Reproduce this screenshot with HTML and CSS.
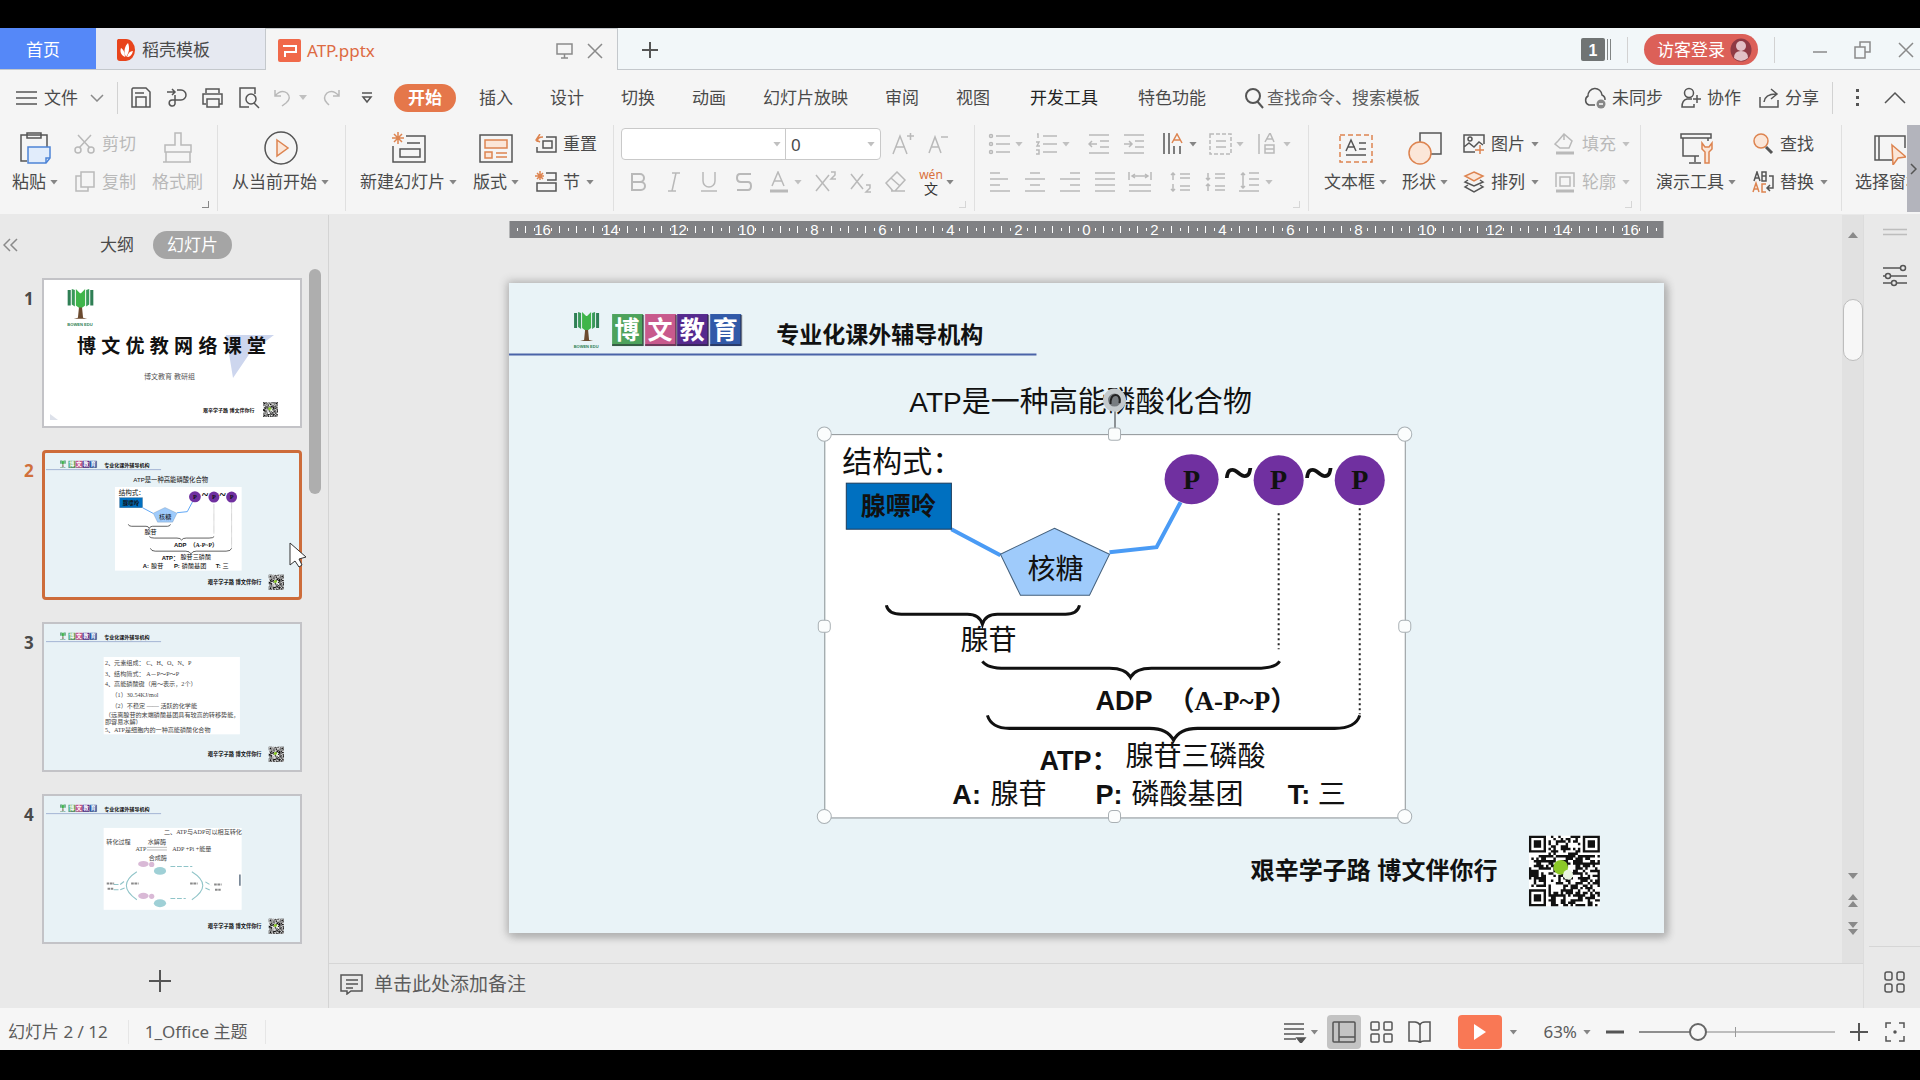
FILE: index.html
```html
<!DOCTYPE html>
<html lang="zh-CN">
<head>
<meta charset="utf-8">
<title>ATP.pptx</title>
<link rel="stylesheet" href="styles.css">
</head>
<body>
<svg class="sprite" aria-hidden="true">
  <defs>
    <symbol id="tree" viewBox="0 0 27 38">
      <path d="M1 2h3v15h-3zM23 2h3v15h-3z" fill="#2f7f55"/>
      <path d="M5 1l3 1v16l-3-2zM22 1l-3 1v16l3-2z" fill="#3a9a5a"/>
      <path d="M9 1l4 4 1 0 4-4v16l-4 3h-1l-4-3z" fill="#3fb54a"/>
      <path d="M12 19h3l1 10 4 1H7l4-1z" fill="#6b4a2f"/>
      <text x="13" y="37" class="tree-name">BOWEN EDU</text>
    </symbol>
    <symbol id="qr" viewBox="0 0 29 29">
      <rect width="29" height="29" fill="#fff"/>
      <path class="qr-modules" id="qr-modules"/>
      <circle cx="13" cy="13" r="3" fill="#8cc928"/>
      <circle cx="16" cy="16" r="2" fill="#e9f5e0"/>
    </symbol>
    <g id="brand">
      <use href="#tree" x="64" y="28" width="27" height="38"/>
      <rect x="103" y="31" width="31" height="32" fill="#4da25c"/>
      <rect x="136" y="31" width="31" height="32" fill="#c85a8d"/>
      <rect x="168" y="31" width="31" height="32" fill="#562a8e"/>
      <rect x="201" y="31" width="31" height="32" fill="#3159a8"/>
      <path d="M103 62h31V32M136 62h31V32M168 62h31V32M201 62h31V32" fill="none" stroke="#223" stroke-opacity=".55" stroke-width="2"/>
      <g class="tile"><text x="118" y="56">博</text><text x="151" y="56">文</text><text x="183" y="56">教</text><text x="216" y="56">育</text></g>
      <text x="267" y="60" class="motto">专业化课外辅导机构</text>
      <path d="M0 71.500H527" stroke="#4a63a8" stroke-width="2"/>
    </g>
    <g id="slogan">
      <text x="741" y="595" class="motto m25">艰辛学子路 博文伴你行</text>
      <use href="#qr" x="1019" y="552" width="71" height="71"/>
    </g>
    <g id="diagram">
      <text x="400" y="129" class="title">ATP<tspan class="cjk29">是一种高能磷酸化合物</tspan></text>
      <rect x="316" y="151" width="580" height="383" fill="#fff"/>
      <text x="333" y="189" class="t30">结构式：</text>
      <path d="M442 246L491 272M600 269L647 264L671 219" fill="none" stroke="#4a9bf5" stroke-width="4"/>
      <rect x="337" y="200" width="105" height="46" fill="#0070c0" stroke="#1c3c5c"/>
      <text x="389" y="232" class="t25">腺嘌呤</text>
      <path d="M545 245L600 271L580 312H511L491 271z" fill="#9fcbfb" stroke="#44607c"/>
      <text x="518" y="296" class="t28">核糖</text>
      <g fill="#7030a0"><ellipse cx="682" cy="196" rx="27" ry="25"/><ellipse cx="769" cy="197" rx="25" ry="25"/><ellipse cx="850" cy="197" rx="25" ry="25"/></g>
      <g class="phos"><text x="682" y="206">P</text><text x="769" y="206">P</text><text x="850" y="206">P</text></g>
      <g class="tilde"><text x="729" y="208">~</text><text x="809" y="208">~</text></g>
      <path d="M769 230V366M850 225V431" stroke="#222" stroke-width="2" stroke-dasharray="2 3"/>
      <g fill="none" stroke="#111" stroke-width="3">
        <path d="M377 322Q379 331 392 331H458Q470 331 473 341Q476 331 488 331H556Q568 331 570 322"/>
        <path d="M473 378Q478 385 496 385H600Q616 385 621 394Q626 385 642 385H747Q766 385 770 378"/>
        <path d="M478 432Q482 445 500 445H640Q658 445 664 457Q670 445 688 445H825Q846 445 850 432"/>
      </g>
      <text x="451" y="367" class="t28">腺苷</text>
      <text x="586" y="427" class="lat">ADP</text>
      <text x="658" y="427" class="ser">（A-P~P）</text>
      <text x="530" y="487" class="lat">ATP：</text>
      <text x="616" y="483" class="t28">腺苷三磷酸</text>
      <text x="443" y="521" class="lat">A:</text><text x="481" y="521" class="t28">腺苷</text>
      <text x="586" y="521" class="lat">P:</text><text x="622" y="521" class="t28">磷酸基团</text>
      <text x="778" y="521" class="lat">T:</text><text x="808" y="521" class="t28">三</text>
    </g>
  </defs>
</svg>

<div class="app">
  <header class="titlebar">
    <button class="tab tab-home">首页</button>
    <button class="tab tab-store">
      <svg width="20" height="24" viewBox="0 0 20 24"><path d="M2 1h8a9 11 0 0 1 0 22H4a3 3 0 0 1-3-3V4a3 3 0 0 1 1-3z" fill="#e8441c"/><path d="M9 19C4 17 4 12 5 10c2 1 4 4 4 9zM10 19c-3-6-1-11 2-14 2 5 1 10-2 14zM11 19c1-4 3-6 6-6-1 4-3 6-6 6z" fill="#fff"/></svg>
      稻壳模板
    </button>
    <div class="tab tab-doc">
      <svg width="23" height="23" viewBox="0 0 23 23"><rect width="23" height="23" rx="2" fill="#f0694a"/><path d="M5 7h13v6H7v5" fill="none" stroke="#fff" stroke-width="2"/></svg>
      <span class="doc-name">ATP.pptx</span>
      <svg class="line mid" width="18" height="18" viewBox="0 0 18 18"><path d="M1 2h15v10H1zM8.500 12v4M5 16h7"/></svg>
      <button class="plain" aria-label="关闭文档"><svg class="line mid" width="18" height="18" viewBox="0 0 18 18"><path d="M2 2l14 14M16 2L2 16"/></svg></button>
    </div>
    <button class="tab-new" aria-label="新建"><svg class="line w2" width="18" height="18" viewBox="0 0 18 18"><path d="M9 1v16M1 9h16"/></svg></button>
    <div class="window-tools">
      <svg width="30" height="23" viewBox="0 0 30 23"><rect width="24" height="23" rx="2" fill="#707474"/><path d="M26.500 1v21M29.500 1v21" stroke="#808484"/><text x="12" y="18" class="badge-num">1</text></svg>
      <i class="vline"></i>
      <button class="login">访客登录<svg width="22" height="24" viewBox="0 0 22 24"><ellipse cx="11" cy="12" rx="10.500" ry="11.500" fill="#8f3a44"/><circle cx="11" cy="8" r="5" fill="#e2c0c6"/><path d="M4 20q0-7 7-7t7 7q-7 6-14 0z" fill="#e2c0c6"/></svg></button>
      <i class="vline"></i>
      <button class="plain win first" aria-label="最小化"><svg class="line mid" width="18" height="18" viewBox="0 0 18 18"><path d="M2 11h14"/></svg></button>
      <button class="plain win" aria-label="还原"><svg class="line mid" width="18" height="18" viewBox="0 0 18 18"><path d="M1 6h10v11H1zM6 6V1h10v10h-5"/></svg></button>
      <button class="plain win" aria-label="关闭"><svg class="line mid" width="18" height="18" viewBox="0 0 18 18"><path d="M2 2l14 14M16 2L2 16"/></svg></button>
    </div>
  </header>

  <nav class="menubar">
    <button class="file-btn">
      <svg class="line" width="22" height="16" viewBox="0 0 22 16"><path d="M0 2h21M0 8h21M0 14h21"/></svg>文件
      <svg class="line mid chev" width="14" height="8" viewBox="0 0 14 8"><path d="M1 1l6 6 6-6"/></svg>
    </button>
    <i class="vline"></i>
    <div class="quick">
      <button class="tool" aria-label="保存"><svg class="line" width="22" height="22" viewBox="0 0 22 22"><path d="M3 1h13l4 4v15H2V2zM6 20V10h10v10M5 6h9"/></svg></button>
      <button class="tool" aria-label="输出为PDF"><svg class="line" width="22" height="22" viewBox="0 0 22 22"><path d="M1 5h8M6 2l3 3-3 3M11 3h4a5 5 0 0 1 0 10H6a3 3 0 1 0 3 4V8"/></svg></button>
      <button class="tool" aria-label="打印"><svg class="line" width="22" height="22" viewBox="0 0 22 22"><path d="M4 6V2h13v4M4 17H1V7h19v10h-3M5 12h12v8H5z"/></svg></button>
      <button class="tool" aria-label="打印预览"><svg class="line" width="22" height="22" viewBox="0 0 22 22"><path d="M11 20H2V1h15v6M16 16l5 5"/><circle cx="13" cy="12" r="5"/></svg></button>
      <button class="tool drop" aria-label="撤消"><svg class="line dim" width="24" height="22" viewBox="0 0 24 22"><path d="M3 3v6h6M3 9Q9 2 15 6q5 5-1 10l-4 3"/></svg><i class="caret dim"></i></button>
      <button class="tool" aria-label="恢复"><svg class="line dim" width="22" height="22" viewBox="0 0 22 22"><path d="M19 3v6h-6M19 9Q13 2 7 6q-5 5 0 10l2 2"/></svg></button>
      <button class="tool" aria-label="更多"><svg class="line" width="12" height="12" viewBox="0 0 12 12"><path d="M1 1h10M2 5h8L6 10z"/></svg></button>
    </div>
    <div class="menus">
      <button class="menu on">开始</button><button class="menu">插入</button><button class="menu">设计</button><button class="menu">切换</button><button class="menu">动画</button><button class="menu">幻灯片放映</button><button class="menu">审阅</button><button class="menu">视图</button><button class="menu wide dark">开发工具</button><button class="menu wide">特色功能</button>
    </div>
    <label class="search"><svg class="line w2" width="20" height="22" viewBox="0 0 20 22"><circle cx="9" cy="9" r="7"/><path d="M13 14l6 7"/></svg><input type="text" placeholder="查找命令、搜索模板" aria-label="查找命令、搜索模板"></label>
    <div class="account">
      <button class="acc"><svg class="line" width="24" height="22" viewBox="0 0 24 22"><path d="M12 18H6a5 5 0 0 1-1-9 7 7 0 0 1 14-1 5 5 0 0 1 3 5"/><circle cx="18" cy="17" r="4.500" fill="#888" stroke="none"/><path d="M16 17h4" stroke="#fff"/></svg>未同步</button>
      <button class="acc"><svg class="line" width="22" height="22" viewBox="0 0 22 22"><circle cx="9" cy="6" r="4.500"/><path d="M12 12H7q-5 1-5 8h12v-3M17 8v8M13 12h8"/></svg>协作</button>
      <button class="acc"><svg class="line" width="22" height="22" viewBox="0 0 22 22"><path d="M2 10v10h18v-7M6 15q1-8 12-8M13 2l6 5-6 5"/></svg>分享</button>
      <i class="vline"></i>
      <button class="plain dots" aria-label="更多选项"><svg width="4" height="20" viewBox="0 0 4 20" fill="#555"><rect y="1" width="3" height="3"/><rect y="8" width="3" height="3"/><rect y="15" width="3" height="3"/></svg></button>
      <button class="plain" aria-label="折叠功能区"><svg class="line" width="22" height="14" viewBox="0 0 22 14"><path d="M1 12l10-10 10 10"/></svg></button>
    </div>
  </nav>

  <section class="ribbon">
    <div class="group g-clip">
      <button class="big"><svg class="line" width="34" height="34" viewBox="0 0 34 34"><path d="M9 30H3V4h26v12M9 2h14v5H9z"/><path d="M10 16h22v11l-4 5H10z" fill="#e1ecfb" stroke="#4d84d6"/><path d="M32 27h-4v5" stroke="#4d84d6"/></svg><span>粘贴<i class="caret"></i></span></button>
      <div class="col">
        <button class="small off"><svg class="line" width="22" height="20" viewBox="0 0 22 20"><path d="M4 1l12 13M17 1L5 14"/><circle cx="4" cy="16" r="3"/><circle cx="17" cy="16" r="3"/></svg>剪切</button>
        <button class="small off"><svg class="line" width="22" height="22" viewBox="0 0 22 22"><path d="M7 1h13v15H7zM7 5H2v15h12v-4"/></svg>复制</button>
      </div>
      <button class="big off"><svg class="line" width="34" height="34" viewBox="0 0 34 34"><path d="M14 14V2h6v12h10v7H4v-7zM5 21v10h24V21M2 31h28"/></svg><span>格式刷</span></button>
      <i class="corner dark"></i>
    </div>
    <div class="group g-play">
      <button class="big"><svg class="line" width="34" height="34" viewBox="0 0 34 34"><circle cx="17" cy="17" r="16"/><path d="M13 9l11 8-11 8z" class="or"/></svg><span>从当前开始<i class="caret"></i></span></button>
    </div>
    <div class="group g-slides">
      <button class="big"><svg class="line" width="34" height="34" viewBox="0 0 34 34"><path d="M14 5h19v26H1V15M15 12h13M8 18h20v8H8z"/><path class="oc" d="M6 1v12M0 7h12M2 3l8 8M10 3l-8 8"/></svg><span>新建幻灯片<i class="caret"></i></span></button>
      <button class="big"><svg class="line" width="34" height="34" viewBox="0 0 34 34"><rect x="1" y="4" width="32" height="27"/><path class="or" d="M6 9h22v8H6zM6 21h7v6H6z"/><path class="oc" d="M17 22h11M17 26h11"/></svg><span>版式<i class="caret"></i></span></button>
      <div class="col">
        <button class="small"><svg class="line" width="22" height="20" viewBox="0 0 22 20"><path d="M11 3h10v15H2v-5M8 7h9v7H8z"/><path class="oc" d="M2 8q0-5 6-5M5 0L1 6l4 2"/></svg>重置</button>
        <button class="small"><svg class="line" width="22" height="22" viewBox="0 0 22 22"><path d="M11 2h10v7h-9M2 12h19v8H2z"/><path class="oc" d="M5 0v9M0 5h9M2 2l6 6M8 2L2 8"/></svg>节<i class="caret"></i></button>
      </div>
    </div>
    <div class="group g-font">
      <div class="col">
        <div class="row">
          <div class="combo"><input type="text" class="font-name" aria-label="字体"><i class="caret dim"></i><input type="text" class="font-size" aria-label="字号" value="0"><i class="caret dim"></i></div>
          <button class="tool" aria-label="增大字号"><svg class="line dim" width="24" height="22" viewBox="0 0 24 22"><path d="M2 21L9 3l7 18M5 14h9M16 3h7M19.500 0v7"/></svg></button>
          <button class="tool" aria-label="减小字号"><svg class="line dim" width="24" height="22" viewBox="0 0 24 22"><path d="M3 20l6-16 6 16M5 14h8M15 4h7"/></svg></button>
        </div>
        <div class="row">
          <button class="tool" aria-label="加粗"><svg class="line dim w2" width="22" height="20" viewBox="0 0 22 20"><path d="M4 2h8a4 4 0 0 1 0 8H4zM4 10h9a4 4 0 0 1 0 8H4z"/></svg></button>
          <button class="tool" aria-label="倾斜"><svg class="line dim" width="22" height="20" viewBox="0 0 22 20"><path d="M9 1h8M5 19h8M13 1L9 19"/></svg></button>
          <button class="tool" aria-label="下划线"><svg class="line dim" width="22" height="22" viewBox="0 0 22 22"><path d="M5 1v9a6 6 0 0 0 12 0V1M3 20h16"/></svg></button>
          <button class="tool" aria-label="删除线"><svg class="line dim w2" width="22" height="20" viewBox="0 0 22 20"><path d="M18 2H7Q4 2 4 6t4 4h7q3 0 3 4t-3 4H4"/></svg></button>
          <button class="tool drop" aria-label="字体颜色"><svg class="line dim" width="24" height="22" viewBox="0 0 24 22"><path d="M5 15L11 1l6 14M7 10h8"/><path d="M3 20h18" stroke-width="3"/></svg><i class="caret dim"></i></button>
          <button class="tool" aria-label="上标"><svg class="line dim" width="24" height="22" viewBox="0 0 24 22"><path d="M2 4l13 16M15 4L2 20M17 1h4v3l-4 4h5"/></svg></button>
          <button class="tool" aria-label="下标"><svg class="line dim" width="24" height="22" viewBox="0 0 24 22"><path d="M2 3l12 15M14 3L2 18M17 14h4v3l-4 4h5"/></svg></button>
          <button class="tool" aria-label="清除格式"><svg class="line dim" width="24" height="22" viewBox="0 0 24 22"><path d="M2 12L13 1l8 8-10 11H9zM7 7l9 8M7 20h14"/></svg></button>
          <button class="tool drop pinyin" aria-label="拼音指南"><span><b>wén</b>文</span><i class="caret"></i></button>
        </div>
      </div>
      <i class="corner"></i>
    </div>
    <div class="group g-para">
      <div class="col">
        <div class="row">
          <button class="tool drop" aria-label="项目符号"><svg class="line dim" width="24" height="22" viewBox="0 0 24 22"><path d="M8 3h14M8 11h14M8 19h14"/><circle cx="3" cy="3" r="1.500"/><circle cx="3" cy="11" r="1.500"/><circle cx="3" cy="19" r="1.500"/></svg><i class="caret dim"></i></button>
          <button class="tool drop" aria-label="编号"><svg class="line dim" width="24" height="22" viewBox="0 0 24 22"><path d="M8 3h14M8 11h14M8 19h14M2 1h1v4M1 9h3l-2 4h3M1 17h3v4H1"/></svg><i class="caret dim"></i></button>
          <button class="tool sp" aria-label="减少缩进"><svg class="line dim" width="22" height="22" viewBox="0 0 22 22"><path d="M1 2h20M12 8h9M12 14h9M1 20h20M1 11h8M4 8l-3 3 3 3"/></svg></button>
          <button class="tool" aria-label="增加缩进"><svg class="line dim" width="22" height="22" viewBox="0 0 22 22"><path d="M1 2h20M12 8h9M12 14h9M1 20h20M1 11h8M6 8l3 3-3 3"/></svg></button>
          <button class="tool drop sp" aria-label="文字方向"><svg class="line" width="24" height="22" viewBox="0 0 24 22"><path d="M2 0v21M7 0v21M12 13v8M18 13v8"/><path class="oc" d="M10 10l5-9 5 9M12 7h6"/></svg><i class="caret"></i></button>
          <button class="tool drop" aria-label="对齐文本"><svg class="line dim" width="24" height="22" viewBox="0 0 24 22"><rect x="1" y="1" width="21" height="20" stroke-dasharray="4 2"/><path d="M7 8h10M7 14h10"/></svg><i class="caret dim"></i></button>
          <button class="tool drop" aria-label="文本排列"><svg class="line dim" width="24" height="22" viewBox="0 0 24 22"><path d="M3 1v20M9 9l5-9 4 9M10 6h7M9 12h9v8H9zM9 16h9"/></svg><i class="caret dim"></i></button>
        </div>
        <div class="row">
          <button class="tool" aria-label="左对齐"><svg class="line dim" width="22" height="20" viewBox="0 0 22 20"><path d="M1 1h10M1 7h18M1 13h10M1 19h20"/></svg></button>
          <button class="tool" aria-label="居中"><svg class="line dim" width="22" height="20" viewBox="0 0 22 20"><path d="M6 1h10M1 7h20M6 13h10M1 19h20"/></svg></button>
          <button class="tool" aria-label="右对齐"><svg class="line dim" width="22" height="20" viewBox="0 0 22 20"><path d="M11 1h10M1 7h20M11 13h10M1 19h20"/></svg></button>
          <button class="tool" aria-label="两端对齐"><svg class="line dim" width="22" height="20" viewBox="0 0 22 20"><path d="M1 1h20M1 7h20M1 13h20M1 19h20"/></svg></button>
          <button class="tool" aria-label="分散对齐"><svg class="line dim" width="24" height="20" viewBox="0 0 24 20"><path d="M1 0v8M23 0v8M4 4h16M7 2L4 4l3 2M17 2l3 2-3 2M1 13h22M1 19h22"/></svg></button>
          <button class="tool sp" aria-label="增大行距"><svg class="line dim" width="22" height="20" viewBox="0 0 22 20"><path d="M11 2h10M11 6h10M11 14h10M11 18h10M4 8V1M2 3l2-2 2 2M4 12v7M2 17l2 2 2-2"/></svg></button>
          <button class="tool" aria-label="减小行距"><svg class="line dim" width="22" height="20" viewBox="0 0 22 20"><path d="M11 2h10M11 6h10M11 14h10M11 18h10M4 1v7M2 6l2 2 2-2M4 19v-7M2 14l2-2 2 2"/></svg></button>
          <button class="tool drop" aria-label="行距"><svg class="line dim" width="24" height="22" viewBox="0 0 24 22"><path d="M11 2h10M11 8h10M11 14h10M1 20h20M5 2v15M3 4l2-2 2 2M3 15l2 2 2-2"/></svg><i class="caret dim"></i></button>
        </div>
      </div>
      <i class="corner"></i>
    </div>
    <div class="group g-draw">
      <button class="big"><svg class="line" width="34" height="34" viewBox="0 0 34 34"><rect class="oc" x="1" y="4" width="32" height="27" stroke-dasharray="5 3"/><path d="M7 20l5-11 5 11M9 16h7M20 12h7M20 18h7M7 24h20"/></svg><span>文本框<i class="caret"></i></span></button>
      <button class="big"><svg class="line" width="34" height="34" viewBox="0 0 34 34"><rect x="12" y="2" width="21" height="21"/><circle class="or" cx="12" cy="22" r="11"/></svg><span>形状<i class="caret"></i></span></button>
      <div class="col">
        <button class="small"><svg class="line" width="22" height="22" viewBox="0 0 22 22"><path d="M12 19H1V2h20v9M1 14l5-4 5 4 5-5 4 3"/><circle cx="7" cy="6" r="2"/><path class="oc" d="M17 12v9M12 17h9"/></svg>图片<i class="caret"></i></button>
        <button class="small"><svg class="line" width="22" height="22" viewBox="0 0 22 22"><path class="or" d="M11 1l9 4-9 5-9-5z"/><path d="M5 9l-3 2 9 4 9-4-3-2M5 14l-3 2 9 5 9-5-3-2"/></svg>排列<i class="caret"></i></button>
      </div>
      <div class="col">
        <button class="small off"><svg class="line" width="22" height="22" viewBox="0 0 22 22"><path d="M4 8l6-7 8 7-3 7H6L1 11zM10 1v6"/><path d="M2 20h18" stroke-width="3"/></svg>填充<i class="caret dim"></i></button>
        <button class="small off"><svg class="line" width="22" height="22" viewBox="0 0 22 22"><path d="M2 16V2h18v14M6 15V6h10v9z"/><path d="M2 20h18" stroke-width="3"/></svg>轮廓<i class="caret dim"></i></button>
      </div>
      <i class="corner"></i>
    </div>
    <div class="group g-tools">
      <button class="big"><svg class="line" width="34" height="34" viewBox="0 0 34 34"><path d="M2 3h30v4H2zM4 7v18h16M29 7v3M16 25v6M10 32h12"/><path class="or" d="M23 12v6l3 3v11h4V21l3-3v-6l-3 4h-4z"/></svg><span>演示工具<i class="caret"></i></span></button>
      <div class="col">
        <button class="small"><svg class="line" width="22" height="22" viewBox="0 0 22 22"><circle class="or" cx="9" cy="8" r="7"/><path d="M14 14l6 6" stroke-width="3"/></svg>查找</button>
        <button class="small"><svg class="line" width="22" height="22" viewBox="0 0 22 22"><path d="M2 10l3-9 3 9M3 7h4M10 1h4v4h-4zM10 5h4v5h-4zM17 5h4v12h-5M18 14l-3 3 3 3"/><path class="oc" d="M1 21l3-9 3 9M2 18h4M14 13h-4v8h4"/></svg>替换<i class="caret"></i></button>
      </div>
    </div>
    <div class="group g-pane">
      <button class="big"><svg class="line" width="34" height="34" viewBox="0 0 34 34"><path d="M20 29H3V5h30v12M7 5v24"/><path class="or" d="M20 14l14 12-8 1-5 7z"/></svg><span>选择窗格</span></button>
    </div>
    <button class="ribbon-next" aria-label="向右滚动"><svg class="line" width="7" height="12" viewBox="0 0 7 12"><path d="M1 1l5 5-5 5"/></svg></button>
  </section>

  <main class="work">
    <aside class="outline">
      <div class="outline-tabs">
        <button class="plain fold" aria-label="收起"><svg class="line mid" width="16" height="14" viewBox="0 0 16 14"><path d="M7 1L1 7l6 6M14 1L8 7l6 6"/></svg></button>
        <button class="plain">大纲</button>
        <button class="otab-on">幻灯片</button>
      </div>
      <div class="outline-body">
        <ol class="thumbs">
          <li><span>1</span><button class="thumb white" aria-label="幻灯片 1"><svg viewBox="0 0 252 142">
            <path d="M180 53h48l-24 18-17 25z" fill="#cdd6ee"/>
            <use href="#tree" x="20" y="6" width="29" height="39"/>
            <text x="31" y="71" class="c-title">博 文 优 教 网 络 课 堂</text>
            <text x="98" y="97" class="c-sub">博文教育 教研组</text>
            <text x="157" y="130" class="c-motto">艰辛学子路 博文伴你行</text>
            <use href="#qr" x="217" y="120" width="15" height="15"/>
            <path d="M4 132v6h8z" fill="#dde1ea"/></svg></button></li>
          <li class="sel"><span>2</span><button class="thumb" aria-label="幻灯片 2"><svg viewBox="0 0 1154 649"><use href="#brand"/><use href="#diagram"/><use href="#slogan"/></svg></button></li>
          <li><span>3</span><button class="thumb" aria-label="幻灯片 3"><svg viewBox="0 0 1154 649"><use href="#brand"/><use href="#slogan"/>
            <rect x="264" y="142" width="624" height="354" fill="#fff"/>
            <g class="notes-text"><text x="270" y="180">2、元素组成： C、H、O、N、P</text><text x="270" y="228">3、结构简式： A－P～P～P</text><text x="270" y="276">4、高能磷酸键（用～表示，2个）</text><text x="300" y="326">（1）30.54KJ/mol</text><text x="300" y="376">（2）不稳定 —— 活跃的化学能</text><text x="270" y="416">（远离腺苷的末端磷酸基团具有较高的转移势能，</text><text x="270" y="448">即容易水解）</text><text x="270" y="486">5、ATP是细胞内的一种高能磷酸化合物</text></g></svg></button></li>
          <li><span>4</span><button class="thumb" aria-label="幻灯片 4"><svg viewBox="0 0 1154 649"><use href="#brand"/><use href="#slogan"/>
            <rect x="264" y="137" width="632" height="375" fill="#fff"/>
            <g class="notes-text"><text x="540" y="166">二、ATP与ADP可以相互转化</text><text x="276" y="212">转化过程</text><text x="466" y="212">水解酶</text><text x="410" y="242">ATP</text><text x="578" y="242">ADP +Pi +能量</text><text x="470" y="284">合成酶</text></g>
            <path d="M462 226h92M462 238h92" stroke="#999" stroke-width="3"/>
            <g fill="none" stroke="#8fc4c8" stroke-width="5"><path d="M416 338Q320 400 416 466M668 338Q768 400 668 466"/><path d="M310 396h30l20-16M310 420h30l20-8M730 384l26 16M730 412l26 12M570 314h100M570 460h70" stroke-dasharray="22 8"/></g>
            <g fill="none" stroke="#8a8a8a" stroke-width="9" stroke-dasharray="12 3"><path d="M278 392h34M282 416h26M390 392h34M660 392h34M770 396h34M774 420h26"/></g>
            <g fill="#d9b9d6"><ellipse cx="446" cy="302" rx="24" ry="14"/><ellipse cx="446" cy="448" rx="24" ry="14"/><circle cx="484" cy="304" r="12"/><circle cx="484" cy="450" r="12"/></g>
            <g fill="#9fd0d6"><ellipse cx="522" cy="334" rx="28" ry="18"/><ellipse cx="522" cy="482" rx="28" ry="18"/></g>
            <path d="M888 350v52" stroke="#678" stroke-width="7"/></svg></button></li>
        </ol>
        <div class="outline-scroll"><i></i></div>
      </div>
      <button class="plain add-slide" aria-label="新建幻灯片"><svg class="line w2" width="24" height="24" viewBox="0 0 24 24"><path d="M12 1v22M1 12h22"/></svg></button>
      <svg class="pointer" width="18" height="26" viewBox="0 0 18 26"><path d="M1 1v22l5-4 4 6 3-2-3-6 7-2z" fill="#fff" stroke="#333"/></svg>
    </aside>

    <section class="stage">
      <svg class="ruler" viewBox="0 0 1154 17"><rect width="1154" height="17" fill="#808184"/><g id="ruler-marks"></g></svg>
      <svg class="slide" viewBox="0 0 1154 649">
        <use href="#brand"/><use href="#diagram"/><use href="#slogan"/>
        <g fill="none" stroke="#8c9296"><rect x="315.500" y="151.500" width="580" height="383"/><path d="M605.500 128V151" stroke-width="2"/></g>
        <circle cx="605" cy="117" r="9" fill="#777c80" stroke="#c4cacd" stroke-width="5"/><path d="M601 121q0-9 5-9t4 8" fill="none" stroke="#222" stroke-width="2"/>
        <g fill="#fbfdfd" stroke="#a9b0b4"><circle cx="315" cy="151" r="7"/><rect x="599" y="145" width="12" height="12" rx="3"/><circle cx="895" cy="151" r="7"/><rect x="309" y="337" width="12" height="12" rx="4"/><rect x="889" y="337" width="12" height="12" rx="4"/><circle cx="315" cy="533" r="7"/><rect x="599" y="527" width="12" height="12" rx="4"/><circle cx="895" cy="533" r="7"/></g>
      </svg>
    </section>
    <div class="vscroll">
      <svg width="10" height="6" viewBox="0 0 10 6"><path d="M0 6l5-6 5 6z"/></svg>
      <i class="vthumb"></i>
      <svg class="vs-down" width="10" height="6" viewBox="0 0 10 6"><path d="M0 0l5 6 5-6z"/></svg>
      <svg width="10" height="13" viewBox="0 0 10 13"><path d="M0 6l5-6 5 6zM0 13l5-6 5 6z"/></svg>
      <svg width="10" height="13" viewBox="0 0 10 13"><path d="M0 0l5 6 5-6zM0 7l5 6 5-6z"/></svg>
    </div>
    <label class="notes"><svg class="line" width="24" height="22" viewBox="0 0 24 22"><path d="M1 2h21v16H11l-4 3v-3H1zM6 7h12M6 11h12M6 15h7"/></svg><input type="text" placeholder="单击此处添加备注" aria-label="备注"></label>
    <aside class="side">
      <svg class="line grip" width="24" height="8" viewBox="0 0 24 8"><path d="M0 1.500h24M0 6.500h24"/></svg>
      <button class="plain" aria-label="属性"><svg class="line" width="24" height="24" viewBox="0 0 24 24"><path d="M0 4h18M8 12h16M0 12h2M0 19h8M13 19h11"/><circle cx="20" cy="4" r="2.500"/><circle cx="5" cy="12" r="2.500"/><circle cx="11" cy="19" r="2.500"/></svg></button>
      <div class="side-foot"><button class="plain" aria-label="更多面板"><svg class="line" width="22" height="22" viewBox="0 0 22 22"><rect x="1" y="1" width="7" height="8" rx="2"/><rect x="13" y="1" width="7" height="8" rx="2"/><rect x="1" y="13" width="7" height="8" rx="2"/><rect x="13" y="13" width="7" height="8" rx="2"/></svg></button></div>
    </aside>
  </main>

  <footer class="status">
    <span class="st-page">幻灯片 2 / 12</span><span class="st-theme">1_Office 主题</span>
    <div class="views">
      <button class="plain drop-b" aria-label="备注"><svg class="line" width="24" height="22" viewBox="0 0 24 22"><path d="M1 3h20M1 8h20M1 13h20M1 18h12"/><path d="M14 17h8l-4 5z" fill="#555"/></svg><i class="caret"></i></button>
      <button class="view on" aria-label="普通视图"><svg class="line" width="24" height="22" viewBox="0 0 24 22"><rect x="1" y="1" width="22" height="20" rx="1"/><path d="M7 1v20M7 16h16"/></svg></button>
      <button class="view" aria-label="幻灯片浏览"><svg class="line" width="24" height="22" viewBox="0 0 24 22"><rect x="1" y="1" width="8" height="8" rx="1"/><rect x="14" y="1" width="8" height="8" rx="1"/><rect x="1" y="13" width="8" height="8" rx="1"/><rect x="14" y="13" width="8" height="8" rx="1"/></svg></button>
      <button class="view" aria-label="阅读视图"><svg class="line" width="24" height="22" viewBox="0 0 24 22"><path d="M12 4q-2-3-5-3H1v19h6q4 0 5 2 1-2 4-2h6V1h-5q-4 0-5 3v17"/></svg></button>
      <button class="show" aria-label="放映"><svg width="14" height="18" viewBox="0 0 14 18"><path d="M1 1l12 8-12 8z" fill="#fff"/></svg></button><i class="caret show-caret"></i>
      <button class="plain zoom-val">63%<i class="caret"></i></button>
      <button class="plain" aria-label="缩小"><svg class="line w3" width="18" height="18" viewBox="0 0 18 18"><path d="M0 9h18"/></svg></button>
      <input class="zoom" type="range" min="0" max="100" value="28" aria-label="缩放">
      <button class="plain" aria-label="放大"><svg class="line w2" width="18" height="18" viewBox="0 0 18 18"><path d="M9 0v18M0 9h18"/></svg></button>
      <button class="plain fit" aria-label="最佳显示比例"><svg class="line" width="20" height="20" viewBox="0 0 20 20"><path d="M1 6V1h5M14 1h5v5M19 14v5h-5M6 19H1v-5"/><circle cx="10" cy="10" r="1" fill="#555"/></svg></button>
    </div>
  </footer>
</div>
<script src="main.js"></script>
</body>
</html>
```
FILE: styles.css
```css
* { box-sizing: border-box; }
body {
  margin: 0;
  background: #000;
  color: #4a4a4a;
  font: 17px/24px "Noto Sans", "Noto Sans CJK SC", sans-serif;
}
button, input { font: inherit; color: inherit; }
button { border: 0; background: none; padding: 0; white-space: nowrap; }
svg { flex: none; display: block; }
i { font-style: normal; flex: none; }
ol { margin: 0; padding: 0; list-style: none; }
.sprite { position: absolute; width: 0; height: 0; }

.app { display: flex; flex-direction: column; min-height: 100vh; padding: 28px 0 30px; }
.line { fill: none; stroke: #555; stroke-width: 1.5; }
.line.mid { stroke: #8a8a8a; }
.line.dim, .off .line { stroke: #b9b9b9; }
.line.w2 { stroke-width: 2; }
.line.w3 { stroke-width: 3; }
.or { fill: #fbe6d8; stroke: #dd8450; }
.oc { stroke: #dd8450; }
.plain { display: flex; align-items: center; }
.vline { width: 1px; height: 32px; background: #d2d2d2; }
.caret { width: 8px; height: 5px; background: #858585; clip-path: polygon(0 0, 100% 0, 50% 100%); }
.caret.dim { background: #c0c0c0; }

/* title bar */
.titlebar { display: flex; height: 42px; background: #f2f7f9; border-bottom: 1px solid #c4c8cc; }
.tab { display: flex; align-items: center; padding-top: 2px; }
.tab-home { width: 96px; justify-content: center; padding-right: 10px; background: #5588f8; color: #fff; }
.tab-store { width: 169px; gap: 6px; padding-left: 20px; background: #e6e9f1; }
.tab-doc { width: 353px; height: 42px; padding: 2px 13px 0 12px; gap: 6px; background: #f5f5f5; border: 1px solid #c4c8cc; border-bottom: 0; color: #dd6a42; }
.doc-name { flex: 1; }
.tab-doc .plain { margin-left: 6px; }
.tab-new { width: 64px; display: flex; align-items: center; justify-content: center; padding-top: 2px; }
.window-tools { display: flex; align-items: center; margin-left: auto; padding: 2px 5px 0 0; gap: 16px; }
.window-tools .vline { height: 26px; }
.login { display: flex; align-items: center; gap: 5px; height: 31px; padding: 0 6px 0 13px; border-radius: 16px; background: #dc6058; color: #fff; }
.win { margin-left: 9px; }
.win.first { margin-left: 20px; }

/* menu bar */
.menubar { display: flex; align-items: center; height: 55px; background: #f5f5f5; padding-right: 14px; }
.file-btn { display: flex; align-items: center; gap: 6px; padding: 0 13px 0 16px; }
.chev { margin-left: 6px; }
.quick { display: flex; padding-left: 5px; }
.tool { width: 35px; height: 32px; display: flex; align-items: center; justify-content: center; }
.quick .tool { width: 36px; }
.tool.drop { width: 47px; justify-content: flex-start; gap: 3px; padding-left: 6px; }
.quick .tool.drop { width: 46px; padding-left: 5px; }
.menus { display: flex; align-items: center; gap: 1px; padding-left: 9px; }
.menu { padding: 0 18px; }
.menu.on { height: 28px; padding: 0 14px; margin-right: 4px; border-radius: 14px; background: #e5774a; color: #fff; font-weight: 700; }
.menu.wide { margin-left: 3px; }
.menu.dark { color: #222; }
.search { display: flex; align-items: center; gap: 3px; margin-left: 20px; }
.search input { width: 180px; border: 0; padding: 0; background: none; outline: 0; }
.search input::placeholder, .notes input::placeholder { color: #5c5c5c; opacity: 1; }
.account { display: flex; align-items: center; margin-left: auto; }
.acc { display: flex; align-items: center; gap: 5px; margin-right: 17px; }
.account .vline { margin-left: -4px; }
.dots { margin: 0 24px 0 23px; }

/* ribbon */
.ribbon { display: flex; height: 90px; background: #f5f5f5; border-bottom: 1px solid #e9e9e9; overflow: hidden; }
.group { position: relative; flex: none; display: flex; align-items: flex-start; height: 86px; border-right: 1px solid #e0e0e0; }
.big { display: flex; flex-direction: column; align-items: center; gap: 5px; padding-top: 6px; }
.big span { display: flex; align-items: center; }
.big .caret { margin-left: 4px; }
.col { display: flex; flex-direction: column; gap: 6px; padding-top: 3px; }
.small { display: flex; align-items: center; gap: 6px; height: 32px; }
.off { color: #b9b9b9; }
.row { display: flex; align-items: center; height: 32px; }
.corner { position: absolute; right: 8px; bottom: 3px; width: 7px; height: 7px; border: solid #d6d6d6; border-width: 0 1px 1px 0; }
.corner.dark { border-color: #888; }
.g-clip { width: 218px; padding-left: 12px; gap: 16px; }
.g-play { width: 128px; padding-left: 14px; }
.g-slides { width: 268px; padding-left: 14px; gap: 16px; }
.g-font { width: 361px; padding-left: 7px; }
.g-para { width: 334px; padding-left: 7px; }
.g-draw { width: 332px; padding-left: 15px; gap: 15px; }
.g-tools { width: 201px; padding-left: 15px; gap: 16px; }
.g-pane { flex: 1 1 0; min-width: 0; padding-left: 13px; border: 0; overflow: hidden; }
.sp { margin-left: 5px; }
.combo { display: flex; align-items: center; width: 260px; height: 32px; margin-right: 4px; padding-right: 5px; background: #fff; border: 1px solid #c9c9c9; border-radius: 4px; }
.combo input { min-width: 0; height: 30px; border: 0; padding: 0 5px; background: none; outline: 0; }
.font-name { width: 151px; }
.font-name + .caret { margin-right: 4px; }
.combo .font-size { flex: 1; border-left: 1px solid #c9c9c9; }
.pinyin span { width: 24px; font-size: 14px; line-height: 16px; color: #333; text-align: center; }
.pinyin b { display: block; font-size: 12px; line-height: 13px; font-weight: 400; color: #d9703c; }
.ribbon-next { width: 13px; height: 87px; background: #b3b4bc; display: flex; align-items: center; justify-content: center; }

/* work area */
.work { flex: 1; display: grid; grid-template: 1fr 45px / 329px minmax(0, 1fr) 21px 57px; background: #e9e9e9; }
.outline { position: relative; grid-row: 1 / 3; border-right: 1px solid #d4d4d4; }
.outline-tabs { display: flex; align-items: center; height: 28px; margin-top: 16px; }
.fold { width: 100px; padding-left: 3px; }
.otab-on { height: 28px; margin-left: 19px; padding: 0 14px; border-radius: 14px; background: #a5a5a5; color: #fff; }
.outline-body { display: flex; gap: 7px; padding-top: 10px; }
.thumbs { display: grid; gap: 22px; padding-top: 9px; }
.thumbs li { display: flex; height: 150px; padding-left: 24px; }
.thumbs span { width: 18px; padding-top: 9px; font-weight: 700; }
.sel span { color: #d0703c; }
.thumb { width: 260px; padding: 2px; border: 2px solid #c3c3c7; background: #e8f2f6; }
.thumb.white { background: #fff; }
.sel .thumb { border: 3px solid #cd6c3a; border-radius: 4px; padding: 1px; }
.outline-scroll i { display: block; width: 12px; height: 225px; border-radius: 6px; background: #aeaeae; }
.add-slide { margin: 25px 0 0 148px; }
.pointer { position: absolute; left: 289px; top: 327px; }
.stage { padding: 6px 178px 0 180px; }
.ruler { width: 100%; }
.slide { width: 100%; margin-top: 45px; background: #e9f3f7; box-shadow: 0 0 8px 2px #b5b5b5, 3px 4px 8px #b0b0b0; }
.vscroll { display: flex; flex-direction: column; align-items: center; gap: 15px; padding: 17px 0 28px; background: #e1e1e1; fill: #8a8a8a; }
.vthumb { width: 20px; height: 62px; margin-top: 46px; border: 1px solid #bdbdbd; border-radius: 10px; background: #f7f7f7; }
.vs-down { margin-top: auto; }
.notes { grid-area: 2 / 2 / 3 / 4; display: flex; align-items: center; gap: 10px; padding: 0 0 4px 11px; border-top: 1px solid #d6d6d6; }
.notes input { flex: 1; border: 0; padding: 0; background: none; outline: 0; font-size: 19px; }
.side { grid-area: 1 / 4 / 3 / 5; display: flex; flex-direction: column; align-items: flex-start; border-left: 1px solid #dcdcdc; padding: 13px 0 0 19px; }
.grip { stroke: #bdbdbd; margin-bottom: 28px; }
.side-foot { margin-top: auto; width: 51px; height: 62px; padding: 24px 0 0 15px; align-self: flex-end; border-top: 1px solid #d6d6d6; }

/* status bar */
.status { display: flex; align-items: center; height: 42px; padding: 6px 15px 0 8px; background: #f6f6f6; color: #5c5c5c; }
.st-page, .st-theme { padding-right: 17px; border-right: 1px solid #e6e6e6; }
.st-page { padding-right: 20px; }
.st-theme { padding-left: 16px; }
.views { display: flex; align-items: center; margin-left: auto; }
.drop-b { gap: 3px; margin-right: 9px; }
.view { width: 34px; height: 34px; padding: 0 5px; margin-right: 4px; border-radius: 4px; }
.view.on { background: #c3c3c3; }
.show { width: 44px; height: 34px; margin-left: 17px; border-radius: 4px; background: #f97855; display: flex; align-items: center; justify-content: center; }
.show-caret { margin: 0 26px 0 7px; }
.zoom-val { gap: 6px; margin-right: 15px; }
.zoom { appearance: none; width: 196px; height: 24px; margin: 0 15px; background: linear-gradient(#999, #999) 96px 50% / 1px 10px no-repeat, linear-gradient(#8e8e8e, #8e8e8e) 0 50% / 58px 2px no-repeat, linear-gradient(#bdbdbd, #bdbdbd) 0 50% / 100% 2px no-repeat; }
.zoom::-webkit-slider-thumb { appearance: none; width: 18px; height: 18px; border: 2px solid #666; border-radius: 50%; background: #f8f8f8; }
.fit { margin-left: 17px; }

/* drawing text */
text { font-family: "Liberation Sans", "Noto Sans CJK SC", sans-serif; fill: #111; }
.badge-num { font-size: 16px; font-weight: 700; text-anchor: middle; fill: #fff; }
.tree-name { font-size: 4px; font-weight: 700; fill: #2f7f55; text-anchor: middle; }
.tile text { font-size: 25px; font-weight: 700; text-anchor: middle; fill: #fff; }
.motto { font-size: 23px; font-weight: 700; }
.m25 { font-size: 24px; }
.title { font-size: 28px; }
.cjk29 { font-size: 29px; }
.t30 { font-size: 30px; }
.t28 { font-size: 28px; }
.t25 { font-size: 25px; font-weight: 700; text-anchor: middle; }
.lat { font-size: 27px; font-weight: 700; }
.ser { font-family: "Liberation Serif", "Noto Sans CJK SC", serif; font-size: 27px; font-weight: 700; }
.phos text { font-family: "Liberation Serif", serif; font-size: 28px; font-weight: 700; text-anchor: middle; }
.tilde text { font-family: "Liberation Serif", serif; font-size: 54px; font-weight: 700; text-anchor: middle; }
.c-title { font-size: 19px; font-weight: 700; }
.c-sub { font-size: 7px; fill: #555; }
.c-motto { font-size: 5px; font-weight: 700; }
.notes-text text { font-family: "Liberation Serif", "Noto Sans CJK SC", serif; font-size: 28px; fill: #444; }
.ruler text { font-size: 15px; fill: #fff; text-anchor: middle; }
.qr-modules { fill: #111; }
```
FILE: main.js
```js
// Ruler: a mark each quarter unit, a number each second unit.
const NS = "http://www.w3.org/2000/svg";
const marks = document.getElementById("ruler-marks");
const UNIT = 34, MID = 577;
let ticks = "";
for (let q = -67; q <= 67; q++) {
  const x = Math.round(MID + (q * UNIT) / 4);
  if (q % 8 === 0) {
    const t = document.createElementNS(NS, "text");
    t.setAttribute("x", x);
    t.setAttribute("y", 14);
    t.textContent = Math.abs(q / 4);
    marks.appendChild(t);
  } else if (Math.abs(q % 2) === 1) {
    ticks += `M${x} 7v3`;
  } else {
    ticks += `M${x} 5v7`;
  }
}
const path = document.createElementNS(NS, "path");
path.setAttribute("d", ticks);
path.setAttribute("stroke", "#fff");
marks.appendChild(path);

// QR code modules: three finder squares and a fixed pseudo-random field.
let seed = 7, d = "";
const inFinder = (x, y) => (x < 8 && y < 8) || (x > 20 && y < 8) || (x < 8 && y > 20);
for (let y = 0; y < 29; y++) {
  for (let x = 0; x < 29; x++) {
    seed = (seed * 1103515245 + 12345) % 2147483648;
    if (!inFinder(x, y) && seed / 2147483648 > 0.47) d += `M${x} ${y}h1v1h-1z`;
  }
}
for (const [x, y] of [[0, 0], [22, 0], [0, 22]]) {
  d += `M${x} ${y}h7v7h-7zM${x + 1} ${y + 1}v5h5v-5zM${x + 2} ${y + 2}h3v3h-3z`;
}
document.getElementById("qr-modules").setAttribute("d", d);
```
